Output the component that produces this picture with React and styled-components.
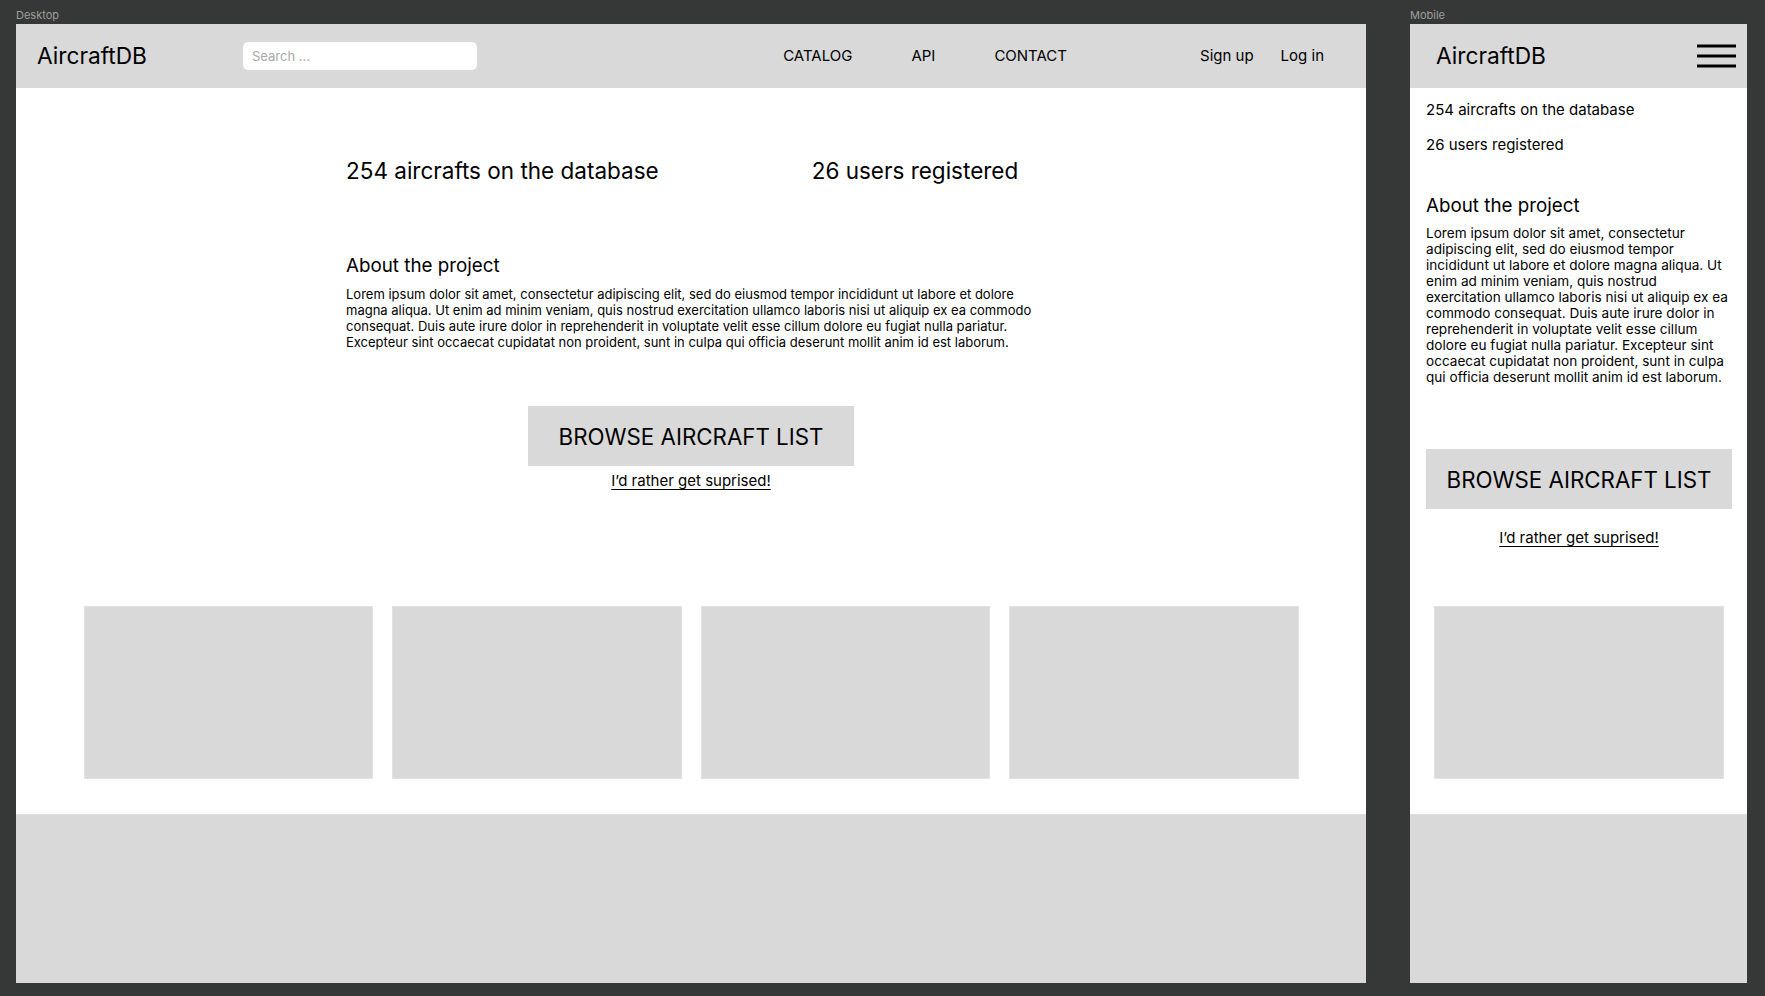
import { Fragment } from 'react';
import styled, { createGlobalStyle } from 'styled-components';

const GlobalStyle = createGlobalStyle`
  html, body {
    margin: 0;
    padding: 0;
    background: #363837;
  }
  body {
    font-family: Inter, "Noto Sans", sans-serif;
    color: #000000;
  }
  * {
    box-sizing: border-box;
  }
`;

const LOREM =
  'Lorem ipsum dolor sit amet, consectetur adipiscing elit, sed do eiusmod tempor incididunt ut labore et dolore magna aliqua. Ut enim ad minim veniam, quis nostrud exercitation ullamco laboris nisi ut aliquip ex ea commodo consequat. Duis aute irure dolor in reprehenderit in voluptate velit esse cillum dolore eu fugiat nulla pariatur. Excepteur sint occaecat cupidatat non proident, sunt in culpa qui officia deserunt mollit anim id est laborum.';

// the narrow frame breaks the same text at these points
const LOREM_MOBILE = [
  'Lorem ipsum dolor sit amet, consectetur',
  'adipiscing elit, sed do eiusmod tempor',
  'incididunt ut labore et dolore magna aliqua. Ut',
  'enim ad minim veniam, quis nostrud',
  'exercitation ullamco laboris nisi ut aliquip ex ea',
  'commodo consequat. Duis aute irure dolor in',
  'reprehenderit in voluptate velit esse cillum',
  'dolore eu fugiat nulla pariatur. Excepteur sint',
  'occaecat cupidatat non proident, sunt in culpa',
  'qui officia deserunt mollit anim id est laborum.',
];

function Hamburger() {
  return (
    <svg width="39" height="24" viewBox="0 0 39 24">
      <rect x="0" y="0.5" width="39" height="3" fill="#000" />
      <rect x="0" y="10.5" width="39" height="3" fill="#000" />
      <rect x="0" y="20.5" width="39" height="3" fill="#000" />
    </svg>
  );
}

function DesktopFrame() {
  return (
    <Column>
      <Label>Desktop</Label>
      <Frame $width={1350}>
        <Header $padding="0 42px 0 21px">
          <Logo $width={206}>AircraftDB</Logo>
          <Search placeholder="Search ..." />
          <Nav>
            <NavLink>CATALOG</NavLink>
            <NavLink>API</NavLink>
            <NavLink>CONTACT</NavLink>
          </Nav>
          <Auth>
            <AuthLink>Sign up</AuthLink>
            <AuthLink>Log in</AuthLink>
          </Auth>
        </Header>
        <Main $padding="69px 0 35px">
          <Intro>
            <Stats>
              <Stat>254 aircrafts on the database</Stat>
              <Stat>26 users registered</Stat>
            </Stats>
            <AboutTitle $mt={70}>About the project</AboutTitle>
            <AboutText $mt={9} $size={13}>{LOREM}</AboutText>
          </Intro>
          <Actions $mt={56} $gap={6}>
            <BrowseButton $width={326}>BROWSE AIRCRAFT LIST</BrowseButton>
            <SurpriseLink>I’d rather get suprised!</SurpriseLink>
          </Actions>
          <Gallery $count={4}>
            <Card />
            <Card />
            <Card />
            <Card />
          </Gallery>
        </Main>
        <Footer />
      </Frame>
    </Column>
  );
}

function MobileFrame() {
  return (
    <Column>
      <Label>Mobile</Label>
      <Frame $width={337}>
        <Header $padding="0 11px 0 26px">
          <Logo>AircraftDB</Logo>
          <MenuButton>
            <Hamburger />
          </MenuButton>
        </Header>
        <Main $padding="13px 15px 35px 16px">
          <MobileStats>
            <MobileStat>254 aircrafts on the database</MobileStat>
            <MobileStat>26 users registered</MobileStat>
          </MobileStats>
          <AboutTitle $mt={40}>About the project</AboutTitle>
          <AboutText $mt={8} $size={13.6} $nowrap>
            {LOREM_MOBILE.map((line, i) => (
              <Fragment key={i}>
                {line}
                {i < LOREM_MOBILE.length - 1 && <br />}
              </Fragment>
            ))}
          </AboutText>
          <Actions $mt={64} $gap={20}>
            <BrowseButton $width={306}>BROWSE AIRCRAFT LIST</BrowseButton>
            <SurpriseLink>I’d rather get suprised!</SurpriseLink>
          </Actions>
          <Gallery $count={1}>
            <Card />
          </Gallery>
        </Main>
        <Footer />
      </Frame>
    </Column>
  );
}

export default function App() {
  return (
    <>
      <GlobalStyle />
      <Canvas>
        <DesktopFrame />
        <MobileFrame />
      </Canvas>
    </>
  );
}

const Canvas = styled.div`
  display: flex;
  gap: 44px;
  padding-left: 16px;
  min-height: 996px;
  background: #363837;
`;

const Column = styled.div`
  display: flex;
  flex-direction: column;
`;

const Label = styled.div`
  height: 24px;
  padding-top: 9px;
  font-size: 11px;
  line-height: 12px;
  color: #9d9e9d;
`;

const Frame = styled.div`
  width: ${(p) => p.$width}px;
  height: 959px;
  background: #ffffff;
  display: flex;
  flex-direction: column;
`;

const Header = styled.header`
  height: 64px;
  flex-shrink: 0;
  background: #d9d9d9;
  display: flex;
  align-items: center;
  padding: ${(p) => p.$padding};
`;

const Logo = styled.div`
  width: ${(p) => (p.$width ? `${p.$width}px` : 'auto')};
  font-size: 22.7px;
  line-height: 28px;
  font-weight: 400;
`;

const Search = styled.input`
  width: 234px;
  height: 28px;
  border: none;
  border-radius: 5px;
  background: #ffffff;
  padding: 0 9px;
  font-family: Inter, "Noto Sans", sans-serif;
  font-size: 13px;
  outline: none;
  &::placeholder {
    color: #a8a8a8;
  }
`;

const Nav = styled.nav`
  display: flex;
  gap: 59px;
  margin-left: auto;
`;

const NavLink = styled.span`
  font-size: 15px;
  line-height: 18px;
`;

const Auth = styled.div`
  display: flex;
  gap: 27px;
  margin-left: 133px;
`;

const AuthLink = styled.span`
  font-size: 15px;
  line-height: 18px;
`;

const MenuButton = styled.div`
  margin-left: auto;
  display: flex;
  align-items: center;
`;

const Main = styled.main`
  flex: 1;
  display: flex;
  flex-direction: column;
  padding: ${(p) => p.$padding};
`;

const Intro = styled.section`
  width: 690px;
  margin: 0 auto;
`;

const Stats = styled.div`
  display: flex;
  gap: 153px;
`;

const Stat = styled.div`
  font-size: 22.5px;
  line-height: 27px;
`;

const MobileStats = styled.div`
  display: flex;
  flex-direction: column;
  gap: 17px;
`;

const MobileStat = styled.div`
  font-size: 15px;
  line-height: 18px;
`;

const AboutTitle = styled.h2`
  margin: ${(p) => p.$mt}px 0 0;
  font-size: 18.8px;
  line-height: 23px;
  font-weight: 400;
`;

const AboutText = styled.p`
  margin: ${(p) => p.$mt}px 0 0;
  font-size: ${(p) => p.$size}px;
  line-height: 16px;
  white-space: ${(p) => (p.$nowrap ? 'nowrap' : 'normal')};
`;

const Actions = styled.div`
  display: flex;
  flex-direction: column;
  align-items: center;
  gap: ${(p) => p.$gap}px;
  margin-top: ${(p) => p.$mt}px;
`;

const BrowseButton = styled.button`
  width: ${(p) => p.$width}px;
  height: 60px;
  border: none;
  background: #d9d9d9;
  font-family: Inter, "Noto Sans", sans-serif;
  font-size: 22.3px;
  font-weight: 400;
  color: #000000;
  cursor: pointer;
`;

const SurpriseLink = styled.a`
  font-size: 15px;
  line-height: 18px;
  color: #000000;
  text-decoration: underline;
  text-underline-offset: 3px;
`;

const Gallery = styled.div`
  margin-top: auto;
  display: grid;
  grid-template-columns: repeat(${(p) => p.$count}, 289.5px);
  gap: 19px;
  justify-content: center;
`;

const Card = styled.div`
  height: 173px;
  background: #d9d9d9;
  border: 1px solid #e2e2e2;
`;

const Footer = styled.footer`
  height: 169px;
  flex-shrink: 0;
  background: #d9d9d9;
  border-top: 1px solid #e0e0e0;
`;
